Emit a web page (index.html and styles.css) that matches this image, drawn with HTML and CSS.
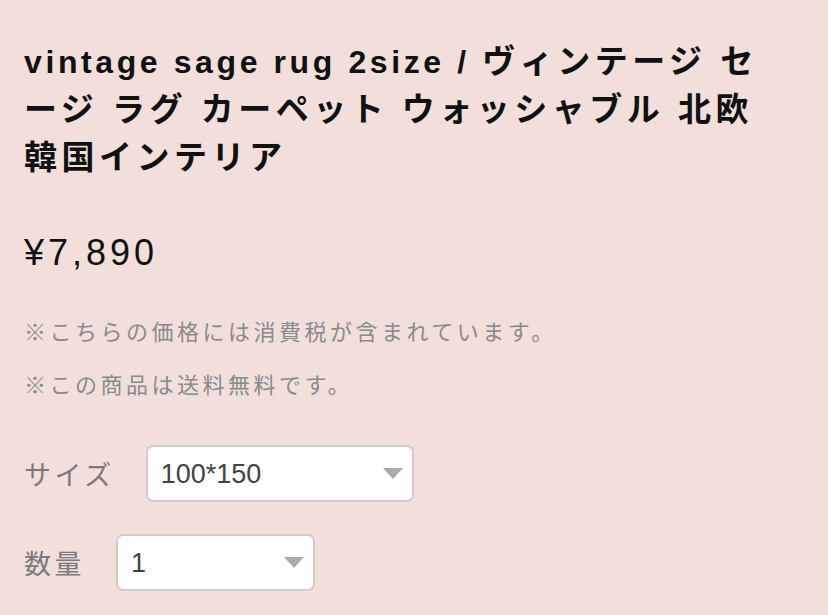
FILE: index.html
```html
<!DOCTYPE html>
<html lang="ja">
<head>
<meta charset="UTF-8">
<title>vintage sage rug 2size</title>
<link rel="stylesheet" href="styles.css">
</head>
<body>
<div class="product">
  <h1 class="product-title">vintage sage rug 2size / <span class="title-ja">ヴィンテージ セージ ラグ カーペット ウォッシャブル 北欧 韓国インテリア</span></h1>
  <p class="price">¥7,890</p>
  <p class="note">※こちらの価格には消費税が含まれています。</p>
  <p class="note">※この商品は送料無料です。</p>
  <div class="option-row">
    <label class="option-label" for="size">サイズ</label>
    <div class="select-box size-box">
      <select id="size">
        <option>100*150</option>
        <option>150*200</option>
      </select>
      <span class="arrow"></span>
    </div>
  </div>
  <div class="option-row">
    <label class="option-label" for="qty">数量</label>
    <div class="select-box qty-box">
      <select id="qty">
        <option>1</option>
        <option>2</option>
        <option>3</option>
      </select>
      <span class="arrow"></span>
    </div>
  </div>
</div>
</body>
</html>
```

FILE: styles.css
```css
body {
  font-family: 'Liberation Sans', 'Noto Sans CJK JP', sans-serif;
  background-color: rgb(242, 223, 219);
  color: #111;
  margin: 0;
  padding: 0;
}
.product {
  padding: 38px 40px 0 24px;
}
.product-title {
  font-size: 32px;
  font-weight: bold;
  line-height: 48px;
  letter-spacing: 3.6px;
  margin: 0;
}
.title-ja {
  font-size: 33px;
  letter-spacing: 4.5px;
}
.price {
  font-size: 36px;
  line-height: 44px;
  letter-spacing: 4px;
  margin: 49px 0 0 0;
}
.note {
  font-size: 22px;
  line-height: 30px;
  letter-spacing: 3.5px;
  color: rgb(138, 138, 138);
  margin: 0;
}
.price + .note {
  margin-top: 43px;
}
.note + .note {
  margin-top: 23px;
}
.option-row {
  display: flex;
  align-items: center;
  margin-top: 32px;
}
.note + .option-row {
  margin-top: 44px;
}
.option-label {
  font-size: 27px;
  letter-spacing: 3.5px;
  color: rgb(122, 122, 122);
  margin-right: 31px;
}
.select-box {
  position: relative;
  height: 57px;
  box-sizing: border-box;
  border: 2px solid rgb(208, 204, 203);
  border-radius: 7px;
  background-color: #fff;
}
.size-box {
  width: 268px;
}
.qty-box {
  width: 199px;
}
.select-box select {
  appearance: none;
  -webkit-appearance: none;
  border: none;
  background: transparent;
  width: 100%;
  height: 100%;
  padding: 0 0 0 13px;
  font-family: 'Liberation Sans', sans-serif;
  font-size: 27px;
  color: rgb(68, 68, 68);
  outline: none;
}
.arrow {
  position: absolute;
  right: 9px;
  top: 21px;
  width: 0;
  height: 0;
  border-left: 10px solid transparent;
  border-right: 10px solid transparent;
  border-top: 11px solid rgb(170, 170, 170);
  pointer-events: none;
}
```
